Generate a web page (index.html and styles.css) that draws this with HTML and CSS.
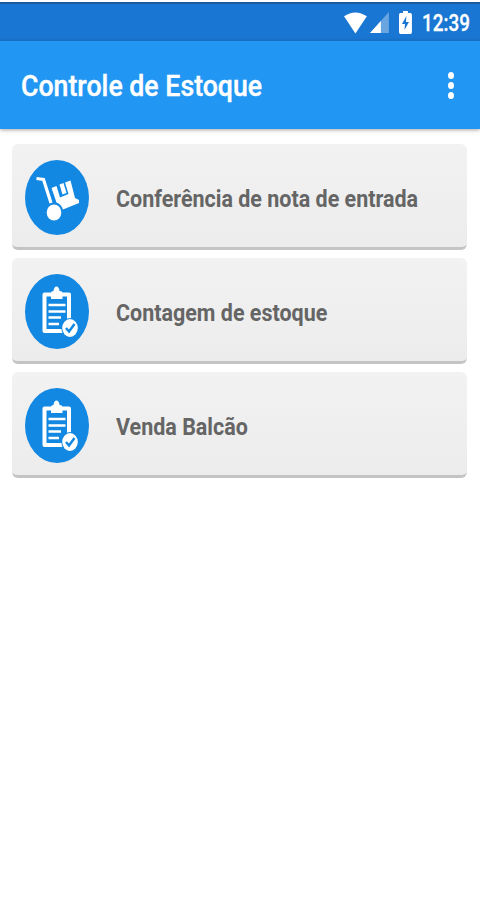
FILE: index.html
```html
<!DOCTYPE html>
<html lang="pt-BR">
<head>
    <meta charset="UTF-8">
    <meta name="viewport" content="width=device-width, initial-scale=1.0">
    <title>Controle de Estoque</title>
    <link rel="stylesheet" href="styles.css">
</head>
<body>
    <!-- shared icon shapes -->
    <svg class="shapes">
        <symbol id="clipboard" viewBox="0 0 64 75">
            <ellipse cx="32" cy="37.5" rx="32" ry="37.5" fill="#1388e2"/>
            <path d="M19.500 20.500H44V57H19.500Z" fill="none" stroke="#fff" stroke-width="4" stroke-linejoin="round"/>
            <path d="M26 25V19Q26 17 28.500 17Q29 12.500 31.500 12.500Q34 12.500 34.500 17Q37.500 17 37.500 19V25Z" fill="#fff"/>
            <path d="M23.500 31H40.500M23.500 37.500H40.500M23.500 43.500H36M23.500 50H34" stroke="#fff" stroke-width="2.500"/>
            <ellipse cx="45" cy="54" rx="8.700" ry="10" fill="#1388e2"/>
            <ellipse cx="45" cy="54" rx="7.800" ry="9" fill="#fff"/>
            <path d="M41 54L44 57.500L49.500 50" fill="none" stroke="#1388e2" stroke-width="2.500"/>
        </symbol>
    </svg>
    <div class="statusBar">
        <svg class="wifi" viewBox="0 0 24 22"><path d="M0 4Q12 -4 24 4L12 22Z" fill="#fff"/></svg>
        <svg class="signal" viewBox="0 0 20 22"><path d="M20 0V22H0Z" fill="#69a5e0"/><path d="M11.500 9.500V22H0Z" fill="#fff"/></svg>
        <svg class="battery" viewBox="0 0 13 23"><path d="M4 0H9V2H11.500Q13 2 13 4V21Q13 23 11.500 23H1.500Q0 23 0 21V4Q0 2 1.500 2H4Z" fill="#fff"/><path d="M7.500 5L3 13H6L5.500 19L10 11H7Z" fill="#1976d2"/></svg>
        <span class="clock">12:39</span>
    </div>
    <header class="toolbar">
        <h1 class="title">Controle de Estoque</h1>
        <div class="menu">
            <i></i>
            <i></i>
            <i></i>
        </div>
    </header>
    <main class="options">
        <div class="option">
            <svg class="optionIcon" viewBox="0 0 64 75">
                <ellipse cx="32" cy="37.500" rx="32" ry="37.500" fill="#1388e2"/>
                <path d="M11.500 18.500L18.500 19.500L26 43" fill="none" stroke="#fff" stroke-width="3.200"/>
                <path d="M26.500 28L31.500 26L35 37.500L43.500 34L40 22.500L45.500 20.500L50 38L54 40V43L38 49.500Q36 44 31.500 42.500Z" fill="#fff"/>
                <path d="M34.500 24.500L38.500 23L41.500 33L37.500 34.500Z" fill="#fff"/>
                <ellipse cx="29" cy="52.500" rx="7.300" ry="8" fill="#fff"/>
            </svg>
            <span class="optionText">Conferência de nota de entrada</span>
        </div>
        <div class="option">
            <svg class="optionIcon"><use href="#clipboard"/></svg>
            <span class="optionText">Contagem de estoque</span>
        </div>
        <div class="option">
            <svg class="optionIcon"><use href="#clipboard"/></svg>
            <span class="optionText">Venda Balcão</span>
        </div>
    </main>
</body>
</html>
```
FILE: styles.css
```css
:root {
    --primary-color: #2196f3;
    --primary-dark: #1976d2;
}
body {
    margin: 0;
    padding-top: 2px;
    background: white;
    font-family: Roboto, sans-serif;
}
.shapes {
    display: none;
}
.statusBar {
    display: flex;
    align-items: center;
    box-sizing: border-box;
    height: 39px;
    padding-left: 344px;
    background: var(--primary-dark);
    border-top: 2px solid #1c5a9c;
}
.wifi {
    width: 23px;
    height: 22px;
}
.signal {
    width: 19px;
    height: 21px;
    margin-left: 3px;
}
.battery {
    width: 13px;
    height: 23px;
    margin-left: 10px;
}
.clock {
    margin-left: 10px;
    padding-top: 2px;
    color: white;
    font-size: 23px;
    font-weight: 500;
    line-height: 1;
    -webkit-text-stroke: 0.3px white;
    transform: scaleX(0.82);
    transform-origin: left;
}
.toolbar {
    display: flex;
    align-items: center;
    justify-content: space-between;
    height: 88px;
    padding: 0 26px 0 21px;
    background: var(--primary-color);
    box-shadow: 0 1px 4px rgba(0, 0, 0, 0.35);
}
.title {
    margin: 2px 0 0;
    color: white;
    font-size: 30px;
    font-weight: 500;
    line-height: 1;
    white-space: nowrap;
    -webkit-text-stroke: 0.4px white;
    transform: scaleX(0.89);
    transform-origin: left;
}
.menu {
    display: flex;
    flex-direction: column;
    gap: 3px;
}
.menu i {
    width: 6px;
    height: 7px;
    border-radius: 50%;
    background: white;
}
.options {
    display: flex;
    flex-direction: column;
    gap: 8px;
    padding: 15px 13px 0 12px;
}
.option {
    display: flex;
    align-items: center;
    box-sizing: border-box;
    height: 106px;
    padding-top: 3px;
    padding-left: 13px;
    background: linear-gradient(#f2f2f2, #ececec);
    border-bottom: 3px solid #c4c4c4;
    border-radius: 6px;
}
.optionIcon {
    flex: none;
    width: 64px;
    height: 75px;
}
.optionText {
    margin-left: 27px;
    padding-top: 3px;
    color: #656565;
    font-size: 24px;
    font-weight: 700;
    white-space: nowrap;
    transform: scaleX(0.895);
    transform-origin: left;
}
```
